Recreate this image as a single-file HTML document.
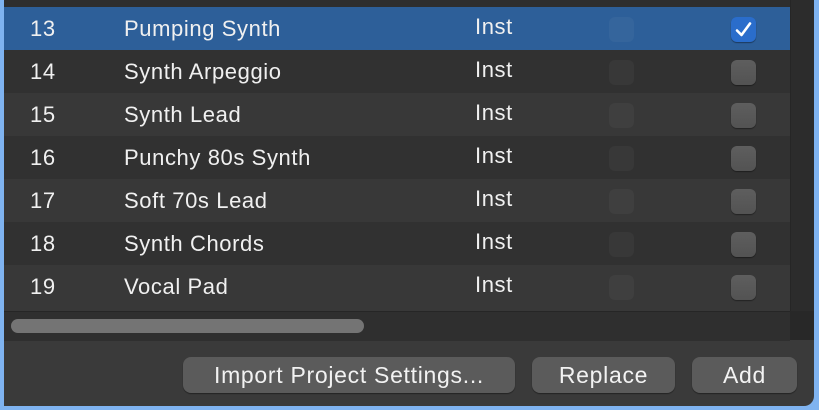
<!DOCTYPE html><html><head><style>
body{margin:0;width:819px;height:410px;background:#7fb3f0;overflow:hidden;font-family:"Liberation Sans",sans-serif;}
#p{position:absolute;left:4px;top:0;width:810px;height:406px;background:#3a3a3a;border-radius:0 0 10px 0;overflow:hidden}
.r{position:absolute;left:0;width:786px;height:43px;color:#f0f0f0;font-size:22px;letter-spacing:0.6px}
.r span{position:absolute;top:9px}
.c1{position:absolute;left:605px;top:10px;width:25px;height:25px;border-radius:6px;background:rgba(255,255,255,0.035)}
.c2{position:absolute;left:727px;top:10px;width:25px;height:25px;border-radius:6px;background:linear-gradient(#5e5e5e,#535353);box-shadow:0 1px 1px rgba(0,0,0,.4)}
.b{position:absolute;top:357px;height:36px;border-radius:8px;background:#5b5b5b;color:#f2f2f2;font-size:23px;letter-spacing:0.7px;text-align:center;line-height:37px;box-shadow:0 1px 1px rgba(0,0,0,.4)}
</style></head><body><div id="p">
<div style="position:absolute;left:0;top:0;width:786px;height:7px;background:#2e2e2e"></div>
<div style="position:absolute;left:786px;top:0;width:24px;height:340px;background:#2c2c2c;border-left:1px solid #262626"></div>
<div class="r" style="top:7px;background:#2d5f99"><span style="left:26px">13</span><span style="left:120px">Pumping Synth</span><span style="left:471px;top:7px">Inst</span><div class="c1" style="background:#35659c"></div><div class="c2" style="background:#2a6dcb"><svg width="25" height="25" viewBox="0 0 25 25"><path d="M6 13.5 L10.5 18 L19 6.5" fill="none" stroke="#fff" stroke-width="2.6" stroke-linecap="round" stroke-linejoin="round"/></svg></div></div>
<div class="r" style="top:50px;background:#313131"><span style="left:26px">14</span><span style="left:120px">Synth Arpeggio</span><span style="left:471px;top:7px">Inst</span><div class="c1"></div><div class="c2"></div></div>
<div class="r" style="top:93px;background:#383838"><span style="left:26px">15</span><span style="left:120px">Synth Lead</span><span style="left:471px;top:7px">Inst</span><div class="c1"></div><div class="c2"></div></div>
<div class="r" style="top:136px;background:#313131"><span style="left:26px">16</span><span style="left:120px">Punchy 80s Synth</span><span style="left:471px;top:7px">Inst</span><div class="c1"></div><div class="c2"></div></div>
<div class="r" style="top:179px;background:#383838"><span style="left:26px">17</span><span style="left:120px">Soft 70s Lead</span><span style="left:471px;top:7px">Inst</span><div class="c1"></div><div class="c2"></div></div>
<div class="r" style="top:222px;background:#313131"><span style="left:26px">18</span><span style="left:120px">Synth Chords</span><span style="left:471px;top:7px">Inst</span><div class="c1"></div><div class="c2"></div></div>
<div class="r" style="top:265px;background:#383838"><span style="left:26px">19</span><span style="left:120px">Vocal Pad</span><span style="left:471px;top:7px">Inst</span><div class="c1"></div><div class="c2"></div></div>
<div style="position:absolute;left:0;top:308px;width:786px;height:3px;background:#383838"></div>
<div style="position:absolute;left:0;top:311px;width:786px;height:29px;background:#2f2f2f;border-top:1px solid #262626"></div>
<div style="position:absolute;left:786px;top:311px;width:24px;height:29px;background:#282828"></div>
<div style="position:absolute;left:7px;top:319px;width:353px;height:14px;border-radius:7px;background:#747474"></div>
<div class="b" style="left:179px;width:332px">Import Project Settings...</div>
<div class="b" style="left:528px;width:143px">Replace</div>
<div class="b" style="left:688px;width:105px">Add</div>
</div></body></html>
